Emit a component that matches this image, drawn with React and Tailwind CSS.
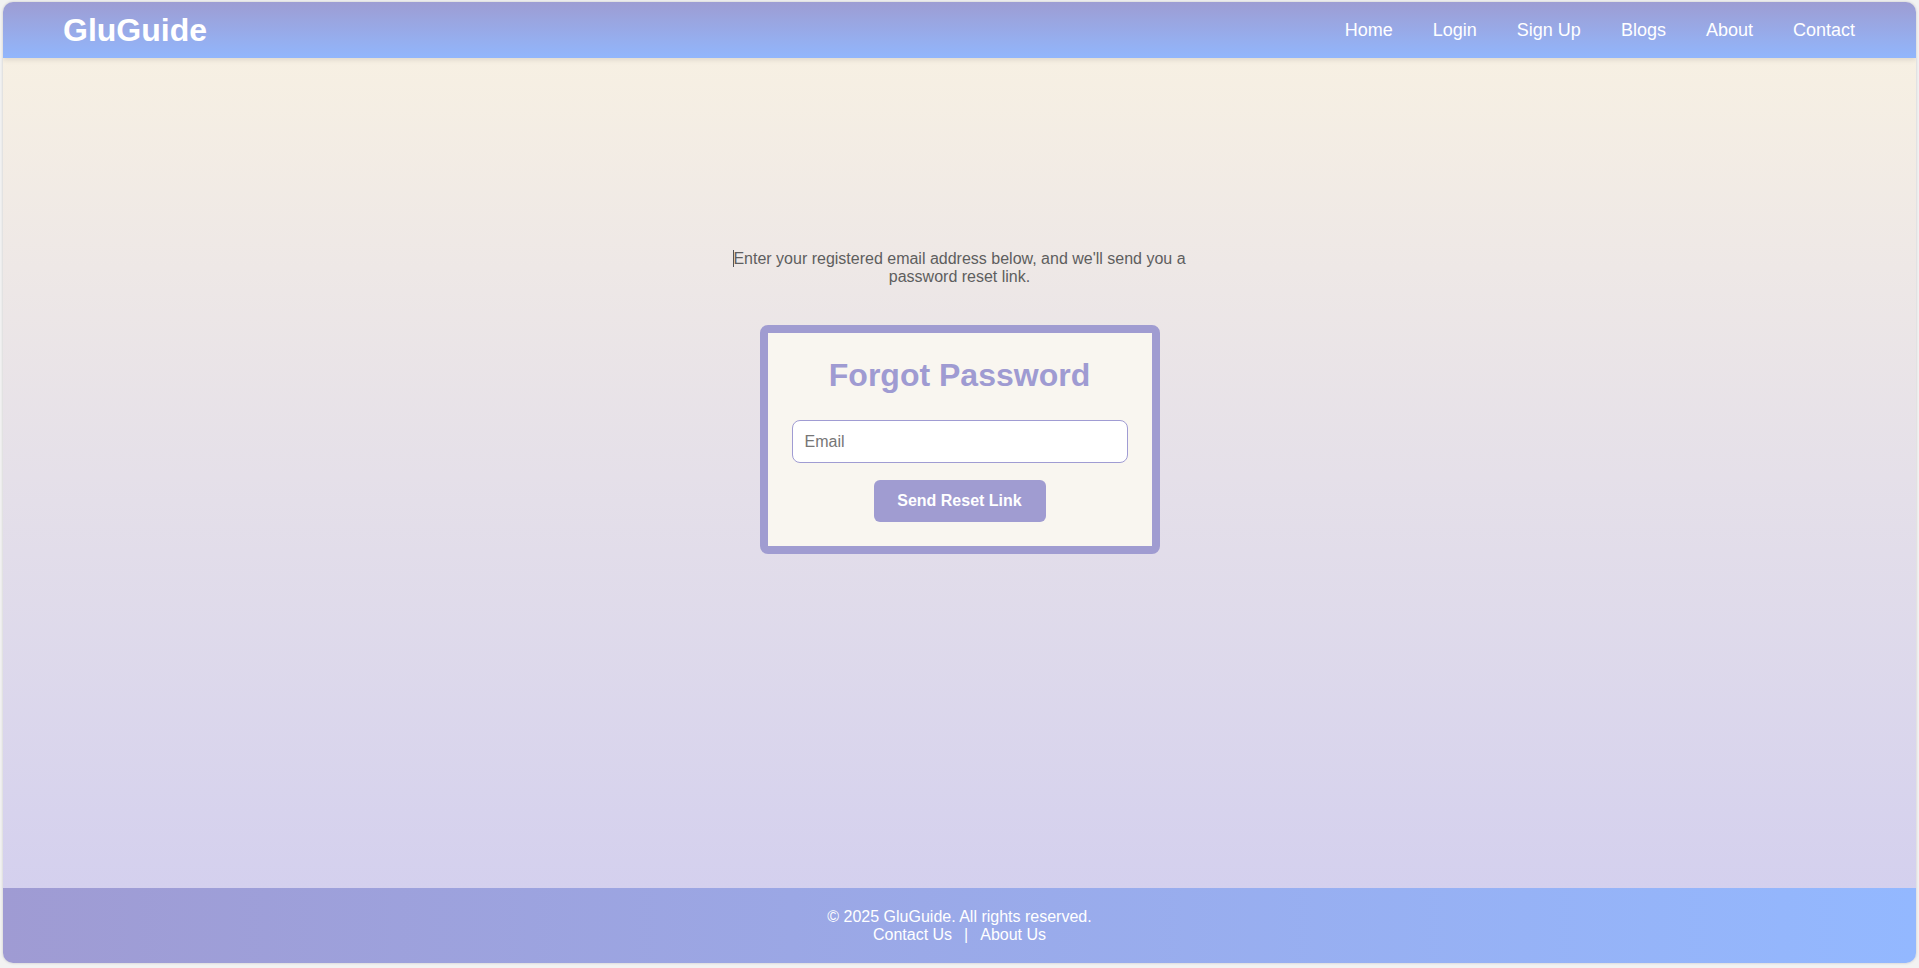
export default function App() {
  const links = ["Home", "Login", "Sign Up", "Blogs", "About", "Contact"];

  return (
    <div
      className="min-h-screen bg-[#f2f2f2] px-[3px] pt-[2px] pb-[5px]"
      style={{ fontFamily: '"Liberation Sans", Arial, sans-serif' }}
    >
      <div className="flex h-[961px] flex-col overflow-hidden rounded-[10px] shadow-[0_0_3px_rgba(0,0,0,0.18)]">
        {/* Header */}
        <header className="relative z-10 flex h-[56px] shrink-0 items-center justify-between bg-gradient-to-b from-[#9d9dd3] to-[#91b6fc] pl-[60px] pr-[61px] shadow-[0_2px_5px_rgba(0,0,0,0.1)]">
          <h1 className="text-[32px] font-bold leading-none text-white">GluGuide</h1>

          <nav className="flex items-center gap-10">
            {links.map((l) => (
              <a key={l} href="#" className="text-[18px] text-white">
                {l}
              </a>
            ))}
          </nav>
        </header>

        {/* Main */}
        <main className="flex flex-1 flex-col items-center bg-gradient-to-b from-[#f7f0e3] to-[#d4d0ee] pt-[192px]">
          <p className="max-w-[500px] text-center text-[16px] leading-[18px] text-[#5e5e5e]">
            <span className="-mr-px inline-block h-[17px] w-px bg-[#555] align-[-3px]" />
            Enter your registered email address below, and we'll send you a password reset link.
          </p>

          {/* Card */}
          <div className="mt-[39px] w-[400px] rounded-[8px] border-[8px] border-[#a09cd1] bg-[#f9f6f0] p-6">
            <h2 className="text-center text-[32px] font-bold leading-[37px] text-[#9f9bd2]">Forgot Password</h2>

            <input
              type="text"
              placeholder="Email"
              className="mt-[26px] h-[43px] w-full rounded-[8px] border border-[#a09cd3] bg-white px-3 text-[16px] text-[#333] outline-none placeholder:text-[#767676]"
            />

            <div className="mt-[17px] flex justify-center">
              <button className="h-[42px] w-[172px] rounded-[6px] bg-[#a09cd1] text-[16px] font-bold text-white">
                Send Reset Link
              </button>
            </div>
          </div>
        </main>

        {/* Footer */}
        <footer className="flex h-[75px] shrink-0 flex-col items-center justify-center bg-gradient-to-r from-[#9f9bd3] to-[#93b8ff] text-[16px] leading-[18px] text-white">
          <p>© 2025 GluGuide. All rights reserved.</p>
          <p>
            <a href="#" className="mx-[12px]">Contact Us</a>|<a href="#" className="mx-[12px]">About Us</a>
          </p>
        </footer>
      </div>
    </div>
  );
}
